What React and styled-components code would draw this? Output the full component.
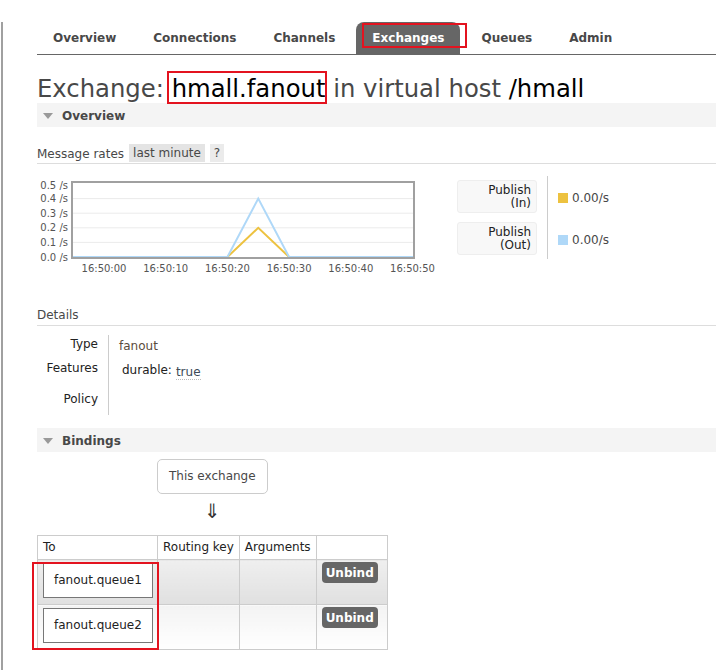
import styled, { createGlobalStyle } from 'styled-components'

const GlobalStyle = createGlobalStyle`
  html, body {
    margin: 0;
    padding: 0;
    background: #fff;
  }
  body {
    font-family: "DejaVu Sans", Verdana, sans-serif;
    font-size: 12px;
    color: #484848;
  }
`

const tabs = ['Overview', 'Connections', 'Channels', 'Exchanges', 'Queues', 'Admin']

const Frame = styled.div`
  margin-left: 1px;
  border-left: 2px solid #a0a0a0;
  padding-left: 34px;
  min-height: 670px;
  box-sizing: border-box;
`

const Nav = styled.ul`
  display: flex;
  margin: 22px 0 0;
  padding: 0;
  list-style: none;
  border-bottom: 1px solid #666;
`

const Tab = styled.li`
  position: relative;
  height: 32px;
  line-height: 32px;
  padding: 0 16px;
  margin-right: 5px;
  font-weight: bold;
  color: ${p => (p.$active ? '#fff' : '#484848')};
  background: ${p => (p.$active ? '#666' : 'transparent')};
  border-radius: 8px 8px 0 0;
`

const Mark = styled.span`
  position: absolute;
  border: 2px solid #e3131f;
  box-sizing: border-box;
  pointer-events: none;
`

const Title = styled.h1`
  margin: 20px 0 0;
  font-size: 24.3px;
  line-height: 28px;
  font-weight: normal;
  color: #484848;
  white-space: nowrap;
`

const Name = styled.span`
  position: relative;
  color: #000;
`

const SectionHead = styled.div`
  display: flex;
  align-items: center;
  height: 24px;
  padding: 1px 0 0 6px;
  box-sizing: border-box;
  background: #f4f4f4;
  font-weight: bold;
  color: #484848;
  margin-top: ${p => p.$top || 0}px;
`

const Caret = styled.span`
  width: 0;
  height: 0;
  border-left: 5px solid transparent;
  border-right: 5px solid transparent;
  border-top: 6px solid #999;
  margin-right: 9px;
`

const RatesBar = styled.div`
  display: flex;
  align-items: center;
  gap: 5px;
  margin-top: 17px;
  height: 19px;
  border-bottom: 1px solid #ddd;
`

const Pill = styled.span`
  background: ${p => (p.$light ? '#ebebeb' : '#e4e4e4')};
  padding: 0 4px;
  line-height: 18px;
  align-self: flex-start;
`

const ChartRow = styled.div`
  display: flex;
  align-items: flex-start;
  margin-top: 12px;
`

const Legend = styled.div`
  display: flex;
`

const LegendCol = styled.div`
  display: flex;
  flex-direction: column;
  gap: 9px;
  padding: 4px 0;
`

const LegendLabel = styled.div`
  width: 80px;
  height: 33px;
  box-sizing: border-box;
  padding: 3px 5px 0;
  background: #f8f8f8;
  border: 1px solid #eee;
  border-radius: 3px;
  text-align: right;
  line-height: 13px;
  color: #222;
`

const ValueCol = styled(LegendCol)`
  margin-left: 10px;
  padding-left: 10px;
  border-left: 1px solid #ccc;
`

const ValueRow = styled.div`
  display: flex;
  align-items: center;
  gap: 4px;
  height: 33px;
  padding-top: 3px;
  box-sizing: border-box;
`

const Swatch = styled.span`
  width: 10px;
  height: 10px;
  background: ${p => p.$color};
`

const Heading = styled.div`
  margin-top: 31px;
  line-height: 16px;
  padding-bottom: 2px;
  border-bottom: 1px solid #ddd;
`

const Details = styled.div`
  display: grid;
  grid-template-columns: 71px auto;
  justify-content: start;
  margin-top: 9px;
`

const DLabel = styled.div`
  height: ${p => p.$h}px;
  padding: 2px 10px 0 0;
  box-sizing: border-box;
  text-align: right;
  color: #222;
  line-height: 14px;
`

const DValue = styled.div`
  height: ${p => p.$h}px;
  padding: 4px 10px 0 ${p => p.$indent || 10}px;
  box-sizing: border-box;
  border-left: 1px solid #ccc;
  line-height: 14px;
  color: ${p => p.$color || '#222'};
  display: flex;
  gap: 4px;
  align-items: flex-start;
`

const Dotted = styled.span`
  color: #3d4a58;
  border-bottom: 1px dotted #bbb;
  margin-top: 2px;
`

const Bindings = styled.div`
  position: relative;
  display: inline-flex;
  flex-direction: column;
  align-items: center;
  margin-top: 7px;
`

const SourceBox = styled.div`
  height: 35px;
  line-height: 33px;
  box-sizing: border-box;
  padding: 0 11px;
  border: 1px solid #ccc;
  border-radius: 5px;
  color: #484848;
`

const Arrow = styled.div`
  margin: 2px 0 9px;
  font-size: 20px;
  line-height: 30px;
  color: #333;
`

const Table = styled.table`
  border-collapse: collapse;
  border: 1px solid #ccc;
  color: #222;
  th, td {
    border: 1px solid #ccc;
    padding: 0;
    vertical-align: top;
    text-align: left;
  }
  th {
    font-weight: normal;
    height: 23px;
    padding: 0 5px;
    line-height: 23px;
  }
  td {
    height: 44px;
  }
`

const Row = styled.tr`
  td {
    background: ${p =>
      p.$alt
        ? 'linear-gradient(#f3f3f3, #ffffff)'
        : 'linear-gradient(#efefef, #e0e0e0)'};
  }
`

const QueueBox = styled.div`
  display: inline-block;
  margin: 3px 0 0 5px;
  height: 35px;
  line-height: 33px;
  box-sizing: border-box;
  padding: 0 10px;
  border: 1px solid #777;
  background: #fff;
  font-size: 12px;
  color: #222;
`

const Unbind = styled.button`
  margin: 2px 0 0 5px;
  height: 21px;
  padding: 0 4px;
  border: 0;
  border-radius: 4px;
  background: #666;
  color: #fff;
  font: bold 12px "DejaVu Sans", Verdana, sans-serif;
`

const yOf = v => 81 - v * 146
const xOf = s => 67 + s * 6.17

function RateChart() {
  const grid = [0.1, 0.2, 0.3, 0.4]
  const yLabels = [0.5, 0.4, 0.3, 0.2, 0.1, 0]
  const xLabels = ['16:50:00', '16:50:10', '16:50:20', '16:50:30', '16:50:40', '16:50:50']
  const line = peak =>
    `M36,81 L${xOf(20)},81 L${xOf(25)},${yOf(peak)} L${xOf(30)},81 L376,81`
  return (
    <svg width="420" height="100" style={{ display: 'block' }}>
      {grid.map(v => (
        <line key={v} x1="36" x2="376" y1={yOf(v)} y2={yOf(v)} stroke="#ebebeb" />
      ))}
      <path d={line(0.2)} fill="none" stroke="#edc240" strokeWidth="2" />
      <path d={line(0.4)} fill="none" stroke="#afd8f8" strokeWidth="2" />
      <rect x="35" y="6" width="342" height="76" fill="none" stroke="#a0a0a0" strokeWidth="2" />
      <g fontFamily="DejaVu Sans, sans-serif" fontSize="10" fill="#545454">
        {yLabels.map(v => (
          <text key={v} x="31" y={Math.max(yOf(v), 9) + 3.5} textAnchor="end">
            {v.toFixed(1)} /s
          </text>
        ))}
        {xLabels.map((t, i) => (
          <text key={t} x={xOf(i * 10)} y="96" textAnchor="middle">
            {t}
          </text>
        ))}
      </g>
    </svg>
  )
}

export default function App() {
  return (
    <Frame>
      <GlobalStyle />
      <Nav>
        {tabs.map(t => (
          <Tab key={t} $active={t === 'Exchanges'}>
            {t}
            {t === 'Exchanges' && (
              <Mark style={{ left: 6, top: 1, width: 105, height: 25 }} />
            )}
          </Tab>
        ))}
      </Nav>

      <Title>
        Exchange:{' '}
        <Name>
          hmall.fanout
          <Mark style={{ left: -5, top: -3, right: -2, bottom: -1 }} />
        </Name>{' '}
        in virtual host <Name>/hmall</Name>
      </Title>

      <SectionHead>
        <Caret />
        Overview
      </SectionHead>

      <RatesBar>
        <span>Message rates</span>
        <Pill>last minute</Pill>
        <Pill $light>?</Pill>
      </RatesBar>

      <ChartRow>
        <RateChart />
        <Legend>
          <LegendCol>
            <LegendLabel>
              Publish
              <br />
              (In)
            </LegendLabel>
            <LegendLabel>
              Publish
              <br />
              (Out)
            </LegendLabel>
          </LegendCol>
          <ValueCol>
            <ValueRow>
              <Swatch $color="#edc240" />
              0.00/s
            </ValueRow>
            <ValueRow>
              <Swatch $color="#afd8f8" />
              0.00/s
            </ValueRow>
          </ValueCol>
        </Legend>
      </ChartRow>

      <Heading>Details</Heading>
      <Details>
        <DLabel $h={24}>Type</DLabel>
        <DValue $h={24} $color="#5b4b3c">fanout</DValue>
        <DLabel $h={31}>Features</DLabel>
        <DValue $h={31} $indent={13}>
          durable: <Dotted>true</Dotted>
        </DValue>
        <DLabel $h={25}>Policy</DLabel>
        <DValue $h={25} />
      </Details>

      <SectionHead $top={13}>
        <Caret />
        Bindings
      </SectionHead>

      <Bindings>
        <SourceBox>This exchange</SourceBox>
        <Arrow>⇓</Arrow>
        <Table>
          <thead>
            <tr>
              <th style={{ width: 109 }}>To</th>
              <th>Routing key</th>
              <th>Arguments</th>
              <th style={{ width: 60 }}></th>
            </tr>
          </thead>
          <tbody>
            {['fanout.queue1', 'fanout.queue2'].map((q, i) => (
              <Row key={q} $alt={i === 1}>
                <td>
                  <QueueBox>{q}</QueueBox>
                </td>
                <td></td>
                <td></td>
                <td>
                  <Unbind>Unbind</Unbind>
                </td>
              </Row>
            ))}
          </tbody>
        </Table>
        <Mark style={{ left: -5, top: 103, width: 127, height: 88 }} />
      </Bindings>
    </Frame>
  )
}
